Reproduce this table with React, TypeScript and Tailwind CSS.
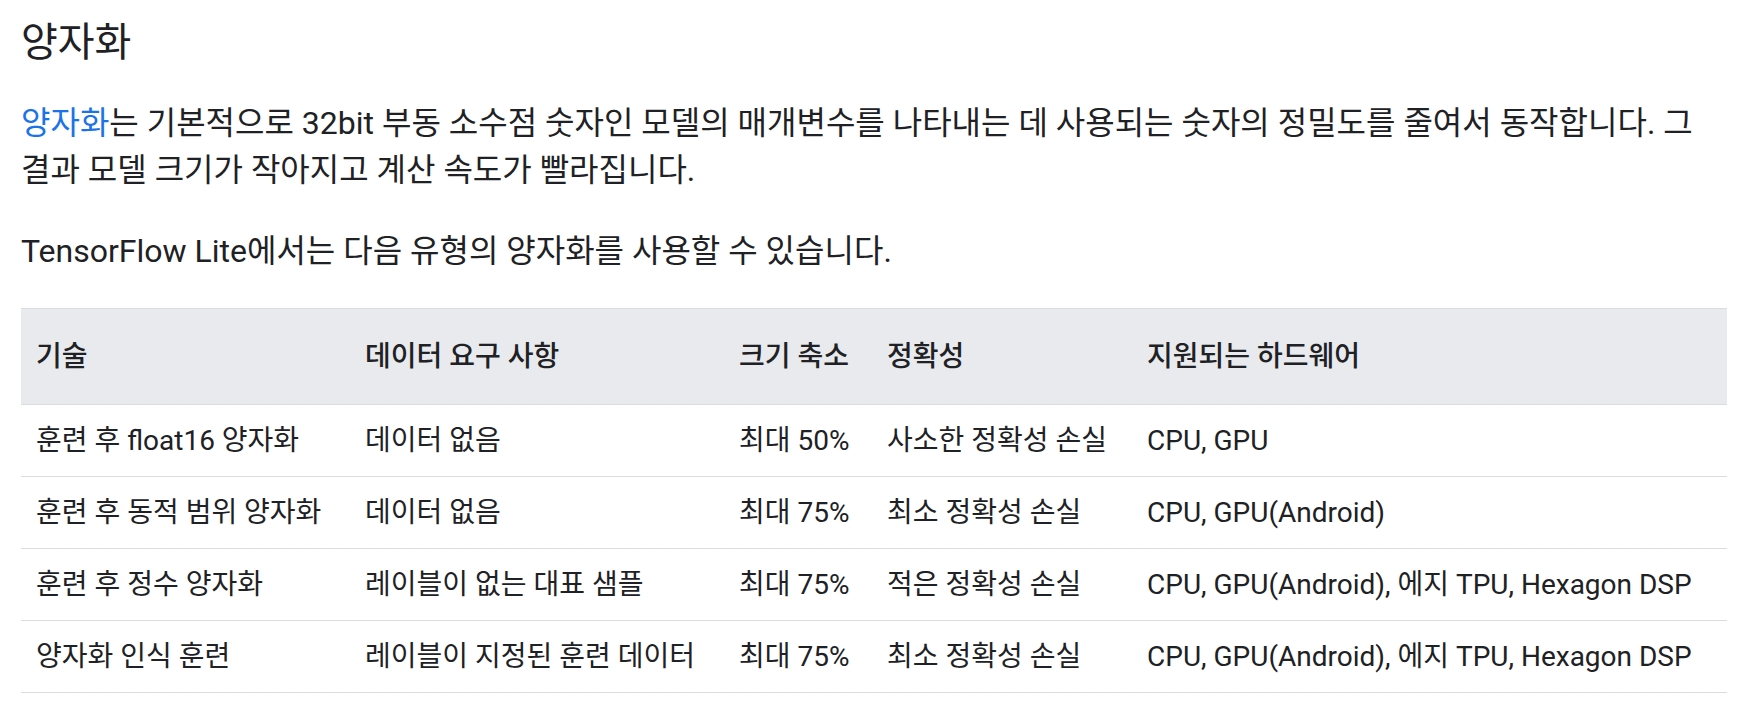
const headers = ['기술', '데이터 요구 사항', '크기 축소', '정확성', '지원되는 하드웨어']

const rows = [
  ['훈련 후 float16 양자화', '데이터 없음', '최대 50%', '사소한 정확성 손실', 'CPU, GPU'],
  ['훈련 후 동적 범위 양자화', '데이터 없음', '최대 75%', '최소 정확성 손실', 'CPU, GPU(Android)'],
  ['훈련 후 정수 양자화', '레이블이 없는 대표 샘플', '최대 75%', '적은 정확성 손실', 'CPU, GPU(Android), 에지 TPU, Hexagon DSP'],
  ['양자화 인식 훈련', '레이블이 지정된 훈련 데이터', '최대 75%', '최소 정확성 손실', 'CPU, GPU(Android), 에지 TPU, Hexagon DSP'],
]

export default function App() {
  return (
    <div className="min-h-screen bg-white px-[21px] text-[#202124] font-[Roboto,'Noto_Sans_CJK_KR',sans-serif]">
      {/* Heading */}
      <h3 className="pt-[19px] mb-[33px] text-[40px] leading-[48px] font-normal">양자화</h3>

      {/* Intro */}
      <p className="text-[32px] leading-[47px] mb-[34px]">
        <a href="#" className="text-[#1a73e8]">양자화</a>는 기본적으로 32bit 부동 소수점 숫자인 모델의 매개변수를 나타내는 데
        사용되는 숫자의 정밀도를 줄여서 동작합니다. 그 결과 모델 크기가 작아지고 계산 속도가 빨라집니다.
      </p>
      <p className="text-[32px] leading-[47px] mb-[33px]">
        TensorFlow Lite에서는 다음 유형의 양자화를 사용할 수 있습니다.
      </p>

      {/* Quantization table */}
      <table className="w-full table-fixed border-collapse text-[28px]">
        <colgroup>
          <col className="w-[329px]" />
          <col className="w-[374px]" />
          <col className="w-[148px]" />
          <col className="w-[260px]" />
          <col />
        </colgroup>
        <thead>
          <tr className="bg-[#e8eaed]">
            {headers.map((h) => (
              <th
                key={h}
                className="border-t border-b border-[#dadce0] pl-[15px] pr-2 pt-[28px] pb-[27px] text-left font-medium leading-[40px] whitespace-nowrap"
              >
                {h}
              </th>
            ))}
          </tr>
        </thead>
        <tbody>
          {rows.map((r, i) => (
            <tr key={i}>
              {r.map((c, j) => (
                <td
                  key={j}
                  className="border-b border-[#dadce0] pl-[15px] pr-2 py-4 leading-[39px] whitespace-nowrap"
                >
                  {c}
                </td>
              ))}
            </tr>
          ))}
        </tbody>
      </table>
    </div>
  )
}
